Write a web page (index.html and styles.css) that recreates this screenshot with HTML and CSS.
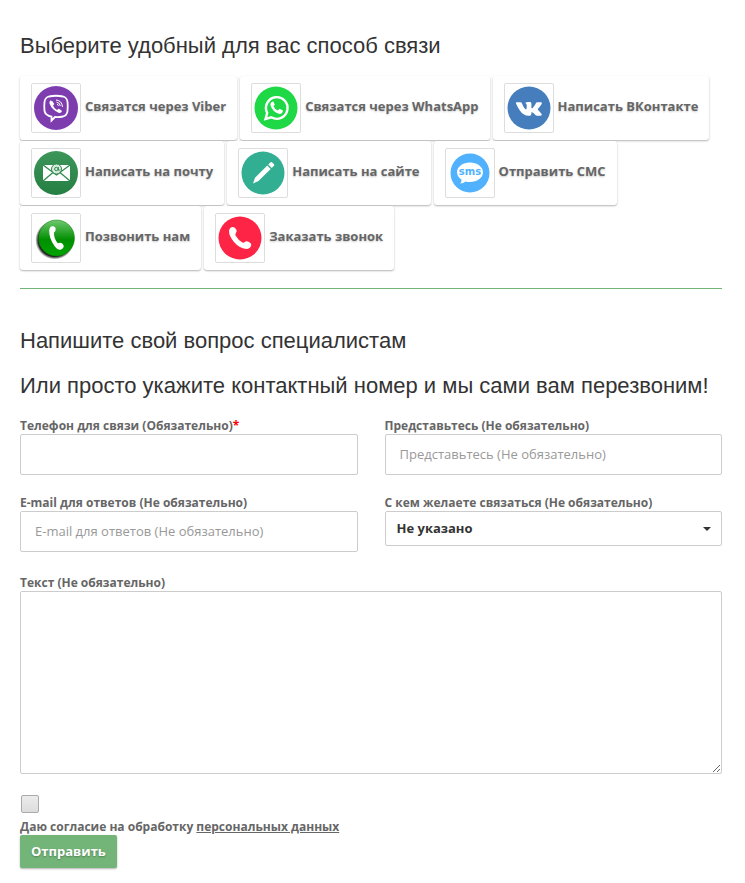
FILE: index.html
```html
<!DOCTYPE html>
<html lang="ru">
<head>
    <meta charset="UTF-8">
    <meta name="viewport" content="width=device-width, initial-scale=1.0">
    <title>Обратная связь</title>
    <link rel="stylesheet" href="styles.css">
</head>
<body>
    <section class="contacts">
        <h3 class="title">Выберите удобный для вас способ связи</h3>
        <div class="contact-list">
            <button type="button" class="contact-btn">
                <span class="thumb">
                    <svg viewBox="0 0 48 48">
                        <circle cx="24" cy="24" r="22" fill="#7d3daf"/>
                        <path d="M17 12.5Q24 11 31 12.5Q35 13.5 35.5 18Q36 22 35.500 27Q35 31.500 31 32.500Q27 33.300 23 33L19.500 36.500V32.600Q13.500 31.500 12.500 27Q12 22 12.500 18Q13 13.500 17 12.500Z" fill="none" stroke="#fff" stroke-width="1.800"/>
                        <path d="M18.500 16.500Q17 17.500 17.500 19.500Q20 26 27 29Q29 29.500 30 27.300Q30 26.500 26.800 24.800Q26 25 25 26Q22 24.500 21 21.500Q22.500 20.500 22 19.500Q20.300 16.300 18.500 16.500Z" fill="#fff"/>
                        <path d="M24 16Q30 16.500 30.500 23M24.500 18.200Q28 18.500 28.300 22M25 20.300Q26.300 20.500 26.400 21.800" fill="none" stroke="#fff" stroke-width="1"/>
                    </svg>
                </span>
                <span class="contact-text">Связатся через Viber</span>
            </button>
            <button type="button" class="contact-btn">
                <span class="thumb">
                    <svg viewBox="0 0 48 48">
                        <circle cx="24" cy="24" r="21.500" fill="#1ed845"/>
                        <path d="M13.500 35L15.200 29A10.800 10.800 0 1 1 19.300 33.300Z" fill="none" stroke="#fff" stroke-width="2.400"/>
                        <path d="M20.500 17.500Q18 18.500 18.500 21.500Q20.500 28 27.500 30Q30.500 30 31 26.500L27.500 24.800L25.800 26.600Q22.800 25.500 21.500 22.300L22.800 20.800L21.500 17.700Z" fill="#fff"/>
                    </svg>
                </span>
                <span class="contact-text">Связатся через WhatsApp</span>
            </button>
            <button type="button" class="contact-btn">
                <span class="thumb">
                    <svg viewBox="0 0 48 48">
                        <circle cx="24" cy="24" r="21.500" fill="#457dbd"/>
                        <path d="M11.500 18.200H15.500Q16.500 18.200 17 19.500Q19 24.500 21 25.500Q22 25 21.700 21Q21.600 19.500 20.200 19Q21.500 17.500 25.200 18Q26.500 18.200 26.400 20V23.700Q27 25 28.500 23Q30 21 31 18.900Q31.300 18.200 32.200 18.200H36.300Q37.500 18.500 36.500 20.200Q35 22.500 33 24.800Q32.500 25.500 33.300 26.200Q35.500 28.200 36.800 30.300Q37 31.500 35.500 31.700H31.800Q30.700 31.500 29.500 30Q27.500 27.800 26.500 28.300Q26.300 28.500 26.300 30.300Q26.200 31.700 24.800 31.700Q18.500 32.300 14.500 26Q12.500 23 11 19.500Q10.800 18.300 11.500 18.200Z" fill="#fff"/>
                    </svg>
                </span>
                <span class="contact-text">Написать ВКонтакте</span>
            </button>
            <button type="button" class="contact-btn">
                <span class="thumb">
                    <svg viewBox="0 0 48 48">
                        <defs>
                            <linearGradient id="mailFill" x1="0" y1="0" x2="0" y2="1">
                                <stop offset="0" stop-color="#3c965a"/>
                                <stop offset="1" stop-color="#257f43"/>
                            </linearGradient>
                        </defs>
                        <circle cx="24" cy="24" r="22" fill="url(#mailFill)"/>
                        <rect x="11" y="16" width="27" height="16" fill="#fff"/>
                        <path d="M11 16L24.500 26L38 16M11 32L21 23.500M38 32L28 23.500" fill="none" stroke="#2f8a4e" stroke-width="1.300"/>
                        <circle cx="24.500" cy="20" r="5" fill="#d7eadd" stroke="#2f8a4e" stroke-width="1"/>
                        <circle cx="24.300" cy="20" r="1.700" fill="none" stroke="#2f8a4e" stroke-width="1"/>
                        <path d="M26.300 18V21.200Q27.200 22 27.800 20.500" fill="none" stroke="#2f8a4e" stroke-width="1"/>
                    </svg>
                </span>
                <span class="contact-text">Написать на почту</span>
            </button>
            <button type="button" class="contact-btn">
                <span class="thumb">
                    <svg viewBox="0 0 48 48">
                        <circle cx="24" cy="24" r="21.500" fill="#32af92"/>
                        <path d="M14 34.500L16 28.800L28.300 16.500L31.700 20L19.500 32ZM29.300 15.500L31.500 13.300Q32.300 12.700 33.200 13.400L35 15.200Q35.600 16 35 16.700L32.700 19Z" fill="#fff"/>
                    </svg>
                </span>
                <span class="contact-text">Написать на сайте</span>
            </button>
            <button type="button" class="contact-btn">
                <span class="thumb">
                    <svg viewBox="0 0 48 48">
                        <circle cx="24" cy="24" r="19.500" fill="#50b2fe"/>
                        <path d="M24 13.500C31 13.500 37 17.500 37 23.300S31 33 24 33Q21.500 33 19.500 32.500Q17.500 34.500 14 34.500Q15.800 33 15.500 30.500Q11 27.500 11 23.300C11 17.500 17 13.500 24 13.500Z" fill="#fff"/>
                        <text class="sms-text" x="24" y="26" text-anchor="middle">sms</text>
                    </svg>
                </span>
                <span class="contact-text">Отправить СМС</span>
            </button>
            <button type="button" class="contact-btn">
                <span class="thumb">
                    <svg viewBox="0 0 48 48">
                        <defs>
                            <linearGradient id="callFill" x1="0" y1="0" x2="0" y2="1">
                                <stop offset="0" stop-color="#6fc96f"/>
                                <stop offset="0.450" stop-color="#159815"/>
                                <stop offset="0.550" stop-color="#008f00"/>
                                <stop offset="1" stop-color="#00a400"/>
                            </linearGradient>
                            <radialGradient id="callShadow">
                                <stop offset="0.850" stop-color="#222"/>
                                <stop offset="1" stop-color="#222" stop-opacity="0"/>
                            </radialGradient>
                        </defs>
                        <circle cx="22.800" cy="26" r="19.500" fill="url(#callShadow)"/>
                        <circle cx="24.500" cy="24" r="18" fill="url(#callFill)" stroke="#0a7d0a" stroke-width="0.500"/>
                        <path d="M19 12.500Q21.500 11.500 23.300 13.500Q24.500 16.500 22 18.500Q21.500 24 25.800 29.300Q29.500 27.500 31.500 31Q32.300 34 29 35.500Q25.500 36.500 22.500 32Q17 24.500 17.200 16.500Q17.400 13.300 19 12.500Z" fill="#fff"/>
                    </svg>
                </span>
                <span class="contact-text">Позвонить нам</span>
            </button>
            <button type="button" class="contact-btn">
                <span class="thumb">
                    <svg viewBox="0 0 48 48">
                        <circle cx="24" cy="24" r="21.500" fill="#fe2446"/>
                        <path d="M14.500 13.800Q17 12 19 14Q21.500 16.500 20.300 18.300Q19 19.500 19.500 21.500Q22 26 26.500 28.500Q28.500 29 29.500 27.500Q31 26.700 33 28Q35.500 29.500 35.300 31Q34.500 34.500 31 35Q24 35 18 28Q13 22 13 17Q13.200 15 14.500 13.800Z" fill="#fff"/>
                    </svg>
                </span>
                <span class="contact-text">Заказать звонок</span>
            </button>
        </div>
    </section>

    <hr class="divider">

    <section class="feedback">
        <h3 class="title">Напишите свой вопрос специалистам</h3>
        <h3 class="title">Или просто укажите контактный номер и мы сами вам перезвоним!</h3>
        <form class="feedback-form">
            <div class="form-grid">
                <div class="field">
                    <label for="phone">Телефон для связи (Обязательно)<span class="required">*</span></label>
                    <input type="tel" class="text-input" id="phone" required>
                </div>
                <div class="field">
                    <label for="name">Представьтесь (Не обязательно)</label>
                    <input type="text" class="text-input" id="name" placeholder="Представьтесь (Не обязательно)">
                </div>
                <div class="field">
                    <label for="email">E-mail для ответов (Не обязательно)</label>
                    <input type="email" class="text-input" id="email" placeholder="E-mail для ответов (Не обязательно)">
                </div>
                <div class="field">
                    <label for="person">С кем желаете связаться (Не обязательно)</label>
                    <div class="select-wrap">
                        <select class="select" id="person">
                            <option>Не указано</option>
                        </select>
                    </div>
                </div>
            </div>
            <div class="field">
                <label for="message">Текст (Не обязательно)</label>
                <textarea class="textarea" id="message"></textarea>
            </div>
            <div class="agree">
                <input type="checkbox" class="checkbox" id="agree">
                <label for="agree">Даю согласие на обработку <a href="#" class="link">персональных данных</a></label>
            </div>
            <button type="submit" class="submit-btn">Отправить</button>
        </form>
    </section>
</body>
</html>
```
FILE: styles.css
```css
* {
    box-sizing: border-box;
}

body {
    margin: 0;
    padding: 33px 23px 15px 20px;
    font-family: 'Open Sans', sans-serif;
    font-size: 13px;
    color: #666;
    background: #fff;
}

.title {
    margin: 0 0 19px;
    font-family: 'Liberation Sans', Arial, sans-serif;
    font-size: 22px;
    font-weight: 400;
    line-height: 26px;
    color: #333;
}

.contacts .title {
    margin-bottom: 17px;
}

.contact-list {
    display: flex;
    flex-wrap: wrap;
    gap: 1px 3px;
}

.contact-btn {
    display: flex;
    align-items: center;
    gap: 4px;
    margin: 0;
    padding: 7px 11px;
    border: none;
    border-radius: 3px;
    background: #fff;
    box-shadow: 0 1px 2px rgba(0, 0, 0, 0.3);
    font: bold 13px/20px 'Open Sans', sans-serif;
    color: #666;
    text-shadow: 0 1px 2px rgba(0, 0, 0, 0.2);
    cursor: pointer;
}

.thumb {
    width: 50px;
    height: 50px;
    border: 1px solid #ddd;
    border-radius: 2px;
}

.thumb svg {
    display: block;
    width: 48px;
    height: 48px;
}

.sms-text {
    font: bold 10px 'DejaVu Sans', sans-serif;
    fill: #50b2fe;
    text-shadow: none;
}

.contact-text {
    padding-bottom: 4px;
}

.divider {
    height: 1px;
    margin: 18px 0 39px;
    border: none;
    background: #73b578;
}

.form-grid {
    display: grid;
    grid-template-columns: 1fr 1fr;
    gap: 20px 27px;
    margin-bottom: 23px;
}

.field label,
.agree label {
    display: block;
    font-size: 12px;
    font-weight: 700;
    line-height: 16px;
}

.required {
    color: #f00;
}

.text-input,
.select,
.textarea {
    display: block;
    width: 100%;
    border: 1px solid #ccc;
    border-radius: 2px;
    background: #fff;
    font: 13px/20px 'Open Sans', sans-serif;
    color: #333;
}

.text-input {
    height: 41px;
    padding: 0 14px 2px;
}

.text-input::placeholder {
    color: #999;
}

.select-wrap {
    position: relative;
}

.select-wrap::after {
    content: "";
    position: absolute;
    top: 16px;
    right: 11px;
    border: 4px solid transparent;
    border-top-color: #333;
    border-bottom: none;
    pointer-events: none;
}

.select {
    height: 35px;
    padding: 0 30px 2px 11px;
    font-weight: 700;
    appearance: none;
}

.textarea {
    height: 183px;
    padding: 10px 14px;
    resize: both;
}

.agree {
    margin-top: 21px;
}

.checkbox {
    display: block;
    width: 18px;
    height: 18px;
    margin: 0 0 6px 1px;
    border: 1px solid #aaa;
    border-radius: 2px;
    background: linear-gradient(#ececec, #dcdcdc);
    appearance: none;
}

.checkbox:checked {
    background: #73b578;
}

.link {
    color: #666;
    text-decoration: underline;
}

.submit-btn {
    display: block;
    height: 33px;
    padding: 0 11px 2px;
    border: none;
    border-radius: 2px;
    background: #73b578;
    box-shadow: 0 1px 2px rgba(0, 0, 0, 0.3);
    font: bold 13px/20px 'Open Sans', sans-serif;
    color: #fff;
    text-shadow: 0 1px 2px rgba(0, 0, 0, 0.3);
    cursor: pointer;
}
```
